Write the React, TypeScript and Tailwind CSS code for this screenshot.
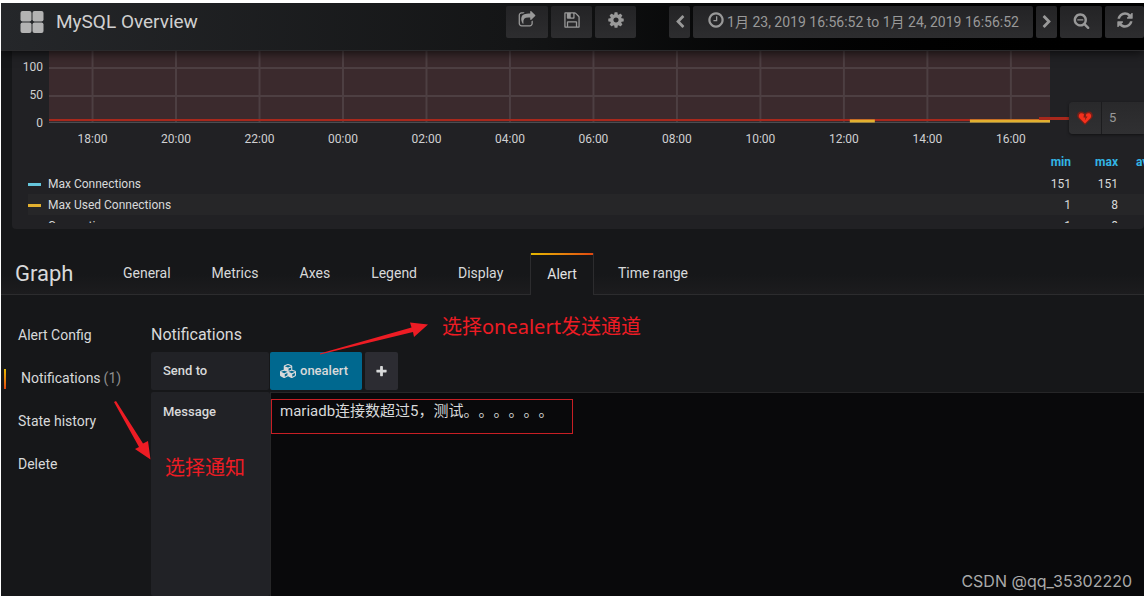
import type { ReactNode } from "react";
import { FaCubes } from "react-icons/fa";

const glyphs = {
  share:
    "M1472 989v259q0 119-84.5 203.5t-203.5 84.5h-832q-119 0-203.5-84.5t-84.5-203.5v-832q0-119 84.5-203.5t203.5-84.5h255q13 0 22.5 9.5t9.5 22.5q0 27-26 32-77 26-133 60-10 4-16 4h-112q-66 0-113 47t-47 113v832q0 66 47 113t113 47h832q66 0 113-47t47-113v-214q0-19 18-29 28-13 54-37 16-16 35-8 21 9 21 29zm237-496l-384 384q-18 19-45 19-12 0-25-5-39-17-39-59v-192h-160q-323 0-438 131-119 137-74 473 3 23-20 34-8 2-12 2-16 0-26-13-10-14-21-31t-39.5-68.5-49.5-99.5-38.5-114-17.5-122q0-49 3.5-91t14-90 28-88 47-81.5 68.5-74 94.5-61.5 124.5-48.5 159.5-30.5 196.5-11h160v-192q0-42 39-59 13-5 25-5 26 0 45 19l384 384q19 19 19 45t-19 45z",
  save: "M512 1536h768v-384h-768v384zm896 0h128v-896q0-14-10-38.5t-20-34.5l-281-281q-10-10-34-20t-39-10v416q0 40-28 68t-68 28h-576q-40 0-68-28t-28-68v-416h-128v1280h128v-416q0-40 28-68t68-28h832q40 0 68 28t28 68v416zm-384-928v-320q0-13-9.5-22.5t-22.5-9.5h-192q-13 0-22.5 9.5t-9.5 22.5v320q0 13 9.5 22.5t22.5 9.5h192q13 0 22.5-9.5t9.5-22.5zm640 32v928q0 40-28 68t-68 28h-1344q-40 0-68-28t-28-68v-1344q0-40 28-68t68-28h928q40 0 88 20t76 48l280 280q28 28 48 76t20 88z",
  cog: "M1152 896q0-106-75-181t-181-75-181 75-75 181 75 181 181 75 181-75 75-181zm512-109v222q0 12-8 23t-20 13l-185 28q-19 54-39 91 35 50 107 138 10 12 10 25t-9 23q-27 37-99 108t-94 71q-12 0-26-9l-138-108q-44 23-91 38-16 136-29 186-7 28-36 28h-222q-14 0-24.5-8.5t-11.5-21.5l-28-184q-49-16-90-37l-141 107q-10 9-25 9-14 0-25-11-126-114-165-168-7-10-7-23 0-12 8-23 15-21 51-66.5t54-70.5q-27-50-41-99l-183-27q-13-2-21-12.5t-8-23.5v-222q0-12 8-23t19-13l186-28q14-46 39-92-40-57-107-138-10-12-10-24 0-10 9-23 26-36 98.5-107.5t94.5-71.5q13 0 26 10l138 107q44-23 91-38 16-136 29-186 7-28 36-28h222q14 0 24.5 8.5t11.5 21.5l28 184q49 16 90 37l142-107q9-9 24-9 13 0 25 10 129 119 165 170 7 8 7 22 0 12-8 23-15 21-51 66.5t-54 70.5q26 50 41 98l183 28q13 2 21 12.5t8 23.5z",
  clock:
    "M1024 544v448q0 14-9 23t-23 9h-320q-14 0-23-9t-9-23v-64q0-14 9-23t23-9h224v-352q0-14 9-23t23-9h64q14 0 23 9t9 23zm416 352q0-148-73-273t-198-198-273-73-273 73-198 198-73 273 73 273 198 198 273 73 273-73 198-198 73-273zm224 0q0 209-103 385.5t-279.5 279.5-385.5 103-385.5-103-279.5-279.5-103-385.5 103-385.5 279.5-279.5 385.5-103 385.5 103 279.5 279.5 103 385.5z",
  zoomOut:
    "M1088 800v64q0 13-9.5 22.5t-22.5 9.5h-576q-13 0-22.5-9.5t-9.5-22.5v-64q0-13 9.5-22.5t22.5-9.5h576q13 0 22.5 9.5t9.5 22.5zm128 32q0-185-131.5-316.5t-316.5-131.5-316.5 131.5-131.5 316.5 131.5 316.5 316.5 131.5 316.5-131.5 131.5-316.5zm512 832q0 53-37.5 90.5t-90.5 37.5q-54 0-90-38l-343-342q-179 124-399 124-143 0-273.5-55.5t-225-150-150-225-55.5-273.5 55.5-273.5 150-225 225-150 273.5-55.5 273.5 55.5 225 150 150 225 55.5 273.5q0 220-124 399l343 343q37 37 37 90z",
  refresh:
    "M1639 1056q0 5-1 7-64 268-268 434.5t-478 166.5q-146 0-282.5-55t-243.5-157l-129 129q-19 19-45 19t-45-19-19-45v-448q0-26 19-45t45-19h448q26 0 45 19t19 45-19 45l-137 137q71 66 161 102t187 36q134 0 250-65t186-179q11-17 53-117 8-23 30-23h192q13 0 22.5 9.5t9.5 22.5zm25-800v448q0 26-19 45t-45 19h-448q-26 0-45-19t-19-45 19-45l138-138q-148-137-349-137-134 0-250 65t-186 179q-11 17-53 117-8 23-30 23h-199q-13 0-22.5-9.5t-9.5-22.5v-7q65-268 270-434.5t480-166.5q146 0 284 55.5t245 156.5l130-129q19-19 45-19t45 19 19 45z",
  left: "M1427 301l-531 531 531 531q19 19 19 45t-19 45l-166 166q-19 19-45 19t-45-19l-742-742q-19-19-19-45t19-45l742-742q19-19 45-19t45 19l166 166q19 19 19 45t-19 45z",
  right:
    "M365 301l531 531-531 531q-19 19-19 45t19 45l166 166q19 19 45 19t45-19l742-742q19-19 19-45t-19-45l-742-742q-19-19-45-19t-45 19l-166 166q-19 19-19 45t19 45z",
  plus: "M1600 736v192q0 40-28 68t-68 28h-416v416q0 40-28 68t-68 28h-192q-40 0-68-28t-28-68v-416h-416q-40 0-68-28t-28-68v-192q0-40 28-68t68-28h416v-416q0-40 28-68t68-28h192q40 0 68 28t28 68v416h416q40 0 68 28t28 68z",
};

function Glyph({ name, className }: { name: keyof typeof glyphs; className: string }) {
  return (
    <svg viewBox="0 0 1792 1792" fill="currentColor" aria-hidden="true" className={className}>
      <path d={glyphs[name]} />
    </svg>
  );
}

function NavButton({ label, className, children }: { label: string; className: string; children: ReactNode }) {
  return (
    <button
      type="button"
      aria-label={label}
      className={`flex h-8 shrink-0 items-center justify-center rounded-xs bg-linear-to-b from-[#232325] to-[#2d2d2f] text-[#999] ${className}`}
    >
      {children}
    </button>
  );
}

function Header() {
  return (
    <header className="relative z-10 flex h-12 shrink-0 items-start justify-between border-b border-[#2a2a2c] bg-linear-to-r from-[#25272a] via-[#141516] via-45% to-black pt-[3px] pl-[19px] shadow-[0_2px_10px_rgba(0,0,0,0.7)]">
      <div className="flex h-8 items-center gap-3">
        <svg viewBox="0 0 24 24" aria-hidden="true" className="size-6 fill-[#b3b3b3]">
          <rect x="0.5" y="1" width="11" height="10.5" rx="2" />
          <rect x="12.5" y="1" width="11" height="10.5" rx="2" />
          <rect x="0.5" y="12.5" width="11" height="10.5" rx="2" />
          <rect x="12.5" y="12.5" width="11" height="10.5" rx="2" />
        </svg>
        <h1 className="text-[19px] text-[#d0d0d0]">MySQL Overview</h1>
      </div>
      <div className="flex gap-[3px]">
        <NavButton label="Share dashboard" className="w-[42px]">
          <Glyph name="share" className="mb-1 size-[18px]" />
        </NavButton>
        <NavButton label="Save dashboard" className="w-[41px]">
          <Glyph name="save" className="mb-1 size-[18px]" />
        </NavButton>
        <NavButton label="Settings" className="mr-[30px] w-[41px]">
          <Glyph name="cog" className="mb-1 size-[18px]" />
        </NavButton>
        <NavButton label="Earlier" className="w-[21px]">
          <Glyph name="left" className="size-[14px]" />
        </NavButton>
        <NavButton label="Time range" className="w-[340px] gap-[2px] text-[14px]">
          <Glyph name="clock" className="mb-1 size-[18px]" />
          <span className="whitespace-nowrap">1月 23, 2019 16:56:52 to 1月 24, 2019 16:56:52</span>
        </NavButton>
        <NavButton label="Later" className="w-[21px]">
          <Glyph name="right" className="size-[14px]" />
        </NavButton>
        <NavButton label="Zoom out" className="w-[42px]">
          <Glyph name="zoomOut" className="mb-1 size-[17px]" />
        </NavButton>
        <NavButton label="Refresh" className="w-[39px]">
          <Glyph name="refresh" className="mb-1 size-[18px]" />
        </NavButton>
      </div>
    </header>
  );
}

const hours = ["18:00", "20:00", "22:00", "00:00", "02:00", "04:00", "06:00", "08:00", "10:00", "12:00", "14:00", "16:00"];
const tickX = (i: number) => `${4.35 + i * 8.34}%`;

function Chart() {
  return (
    <div className="relative pr-[94px] pl-[37px]">
      <svg className="block h-[100px] w-full overflow-visible text-[12px]" role="img" aria-label="MySQL connections">
        <rect width="100%" height="71" fill="#3b2a2d" />
        {hours.map((h, i) => (
          <g key={h}>
            <line x1={tickX(i)} x2={tickX(i)} y1="0" y2="71" stroke="#4d3f42" strokeWidth="2" />
            <text x={tickX(i)} y="92" textAnchor="middle" fill="#d0d0d2">
              {h}
            </text>
          </g>
        ))}
        <line x1="0" x2="100%" y1="17" y2="17" stroke="#4d3f42" strokeWidth="2" />
        <line x1="0" x2="100%" y1="45" y2="45" stroke="#4d3f42" strokeWidth="2" />
        <line x1="0" x2="100%" y1="71.5" y2="71.5" stroke="#4b4c50" />
        <line x1="0" x2="100%" y1="69" y2="69" stroke="#a8281c" strokeWidth="2" />
        <line x1="80%" x2="82.5%" y1="70" y2="70" stroke="#e2b02f" strokeWidth="3" />
        <line x1="92%" x2="100%" y1="70" y2="70" stroke="#e2b02f" strokeWidth="3" />
        <g fill="#d0d0d2" textAnchor="end">
          <text x="-6" y="20">100</text>
          <text x="-6" y="48">50</text>
          <text x="-6" y="76">0</text>
        </g>
      </svg>
      <div className="absolute top-[51px] right-0 flex items-center">
        <div className="h-[3px] w-[30px] bg-[#a8281c]" />
        <div className="flex h-8 items-center rounded-l bg-linear-to-b from-[#29292b] to-[#303032] text-[13px] text-[#999] shadow-[0_1px_3px_rgba(0,0,0,0.5)]">
          <div className="flex h-full w-[33px] items-center justify-center border-r border-[#1c1c1e]">
            <svg viewBox="0 0 16 14" aria-hidden="true" className="h-[14px] w-4">
              <path d="M8 14 L1 7 C-1 4 1 0.500 4 0.500 C6 0.500 7 1.500 8 2.500 C9 1.500 10 0.500 12 0.500 C15 0.500 17 4 15 7 Z" fill="#7a1f17" />
              <path d="M8 12.500 L2.500 7 C1 5 2 2.200 4.500 2.200 C5.500 2.200 6.300 2.600 7 3.300 L6.500 6.500 H8.500 L7.800 9.500 L10.500 5.500 H8.700 L9.300 3 C10 2.500 10.700 2.200 11.500 2.200 C14 2.200 15 5 13.500 7 Z" fill="#f5301c" />
            </svg>
          </div>
          <div className="w-[42px] pl-[7px]">5</div>
        </div>
      </div>
    </div>
  );
}

const series = [
  { name: "Max Connections", min: 151, max: 151, bar: "bg-[#65c5db]" },
  { name: "Max Used Connections", min: 1, max: 8, bar: "bg-[#e2b02f]" },
  { name: "Connections", min: 1, max: 8, bar: "bg-[#7eb26d]" },
];

function Legend() {
  return (
    <div className="h-[72px] overflow-hidden pl-4">
      <table className="w-full table-fixed border-collapse text-right text-[12px] leading-4 text-[#d8d9da]">
        <thead>
          <tr className="h-[22px] text-[#33b5e5]">
            <th aria-label="Series" />
            <th className="w-[46px] p-0 font-bold">min</th>
            <th className="w-[47px] p-0 font-bold">max</th>
            <th className="w-[26px] overflow-hidden p-0 pl-[18px] text-left font-bold">avg</th>
          </tr>
        </thead>
        <tbody>
          {series.map((s) => (
            <tr key={s.name} className="h-[21px] even:bg-[#262628]">
              <td className="p-0">
                <span className="flex items-center gap-[7px]">
                  <span className={`mt-[2px] h-[3px] w-[13px] ${s.bar}`} />
                  {s.name}
                </span>
              </td>
              <td className="p-0">{s.min}</td>
              <td className="p-0">{s.max}</td>
              <td className="p-0" />
            </tr>
          ))}
        </tbody>
      </table>
    </div>
  );
}

const tabs = ["General", "Metrics", "Axes", "Legend", "Display", "Alert", "Time range"];

function Tabs() {
  return (
    <nav className="mt-6 flex h-[42px] shrink-0 items-stretch bg-linear-to-b from-[#161719] from-50% to-[#1c1c1e]">
      <h2 className="flex w-[101px] items-center border-b border-[#2c2c2e] pl-[14px] text-[22px] text-[#d8d9da]">Graph</h2>
      {tabs.map((t) =>
        t === "Alert" ? (
          <a key={t} href="#alert" className="flex flex-col border-x border-[#2c2c2e] bg-[#161719] text-[14px] text-[#e3e3e3]">
            <span className="h-[2px] bg-linear-to-r from-[#e5b800] to-[#e0460f]" />
            <span className="flex flex-1 items-center px-4 pb-[2px]">{t}</span>
          </a>
        ) : (
          <a
            key={t}
            href={`#${t.toLowerCase()}`}
            className="flex items-center border-b border-[#2c2c2e] pr-[20px] pl-[21px] text-[14px] whitespace-nowrap text-[#d8d9da] last-of-type:pl-6 nth-[6]:pr-[27px]"
          >
            {t}
          </a>
        ),
      )}
      <span className="flex-1 border-b border-[#2c2c2e]" />
    </nav>
  );
}

function Sidebar() {
  const item = "flex h-[43px] items-center pl-[17px]";
  return (
    <aside className="w-[150px] shrink-0 pt-[19px] text-[14px] text-[#d8d9da]">
      <a href="#config" className={item}>Alert Config</a>
      <a href="#notifications" className="flex h-[43px] items-center pl-[3px]">
        <span className="mr-[15px] h-5 w-[2px] bg-linear-to-b from-[#e5b800] to-[#e0460f]" />
        Notifications <span className="ml-[3px] text-[#8e8e8e]">(1)</span>
      </a>
      <a href="#history" className={item}>State history</a>
      <a href="#delete" className={item}>Delete</a>
    </aside>
  );
}

function AlertForm() {
  return (
    <section className="flex min-w-0 flex-1 flex-col pt-7">
      <h3 className="h-[29px] text-[16px] leading-6 text-[#d8d9da]">Notifications</h3>
      <div className="flex h-[38px] text-[13px] font-medium text-[#d8d9da]">
        <div className="flex w-[118px] items-center rounded-xs bg-[#212226] pl-3">Send to</div>
        <button type="button" className="ml-px flex w-[92px] items-center gap-1 rounded-xs bg-[#00688f] pl-[10px]">
          <FaCubes className="size-4" />
          onealert
        </button>
        <button type="button" aria-label="Add channel" className="ml-[3px] flex w-[33px] items-center justify-center rounded-xs bg-[#2c2c32]">
          <Glyph name="plus" className="size-[13px]" />
        </button>
      </div>
      <div className="mt-[2px] flex flex-1">
        <label htmlFor="message" className="w-[119px] rounded-xs bg-[#212226] pt-3 pl-3 text-[13px] leading-4 font-medium text-[#d8d9da]">
          Message
        </label>
        <textarea
          id="message"
          defaultValue="mariadb连接数超过5，测试。。。。。。"
          className="min-w-0 flex-1 resize-none border-t border-l border-[#262628] bg-[#09090b] py-2 pl-[9px] text-[15px] leading-5 text-[#d8d9da] outline-none [text-spacing-trim:space-all]"
        />
      </div>
    </section>
  );
}

function Annotations() {
  return (
    <div className="pointer-events-none absolute inset-0 font-['Noto_Sans','Noto_Sans_CJK_SC',sans-serif] text-[20px] leading-6 text-[#ed1c24]">
      <svg className="absolute inset-0 size-full" fill="#ed1c24" aria-hidden="true">
        <path d="M319 350.500 L410.500 324.500 L409 319.500 L427 321.500 L413 334 L412 329 L319 351.500 Z" />
        <path d="M113 399 L115 398 L142 440.500 L147 438 L149.500 456.500 L134 446 L138 444 Z" />
      </svg>
      <div className="absolute top-[396px] left-[270px] h-[35px] w-[302px] border border-[#c81e24]" />
      <p className="absolute top-[312px] left-[441px] whitespace-nowrap">选择onealert发送通道</p>
      <p className="absolute top-[453px] left-[164px] whitespace-nowrap">选择通知</p>
    </div>
  );
}

export default function App() {
  return (
    <div className="h-screen bg-white pt-[3px] pr-[3px] pb-1 pl-px font-['Roboto','Noto_Sans_CJK_SC',sans-serif]">
      <main className="relative flex h-full flex-col overflow-hidden bg-[#161719]">
        <Header />
        <div className="ml-[11px] shrink-0 rounded-b bg-[#212124] pb-[6px]">
          <Chart />
          <Legend />
        </div>
        <Tabs />
        <div className="flex min-h-0 flex-1">
          <Sidebar />
          <AlertForm />
        </div>
        <Annotations />
        <p className="absolute right-3 bottom-[3px] font-['Inter',sans-serif] text-[16px] leading-6 text-[#aaa]">CSDN @qq_35302220</p>
      </main>
    </div>
  );
}
